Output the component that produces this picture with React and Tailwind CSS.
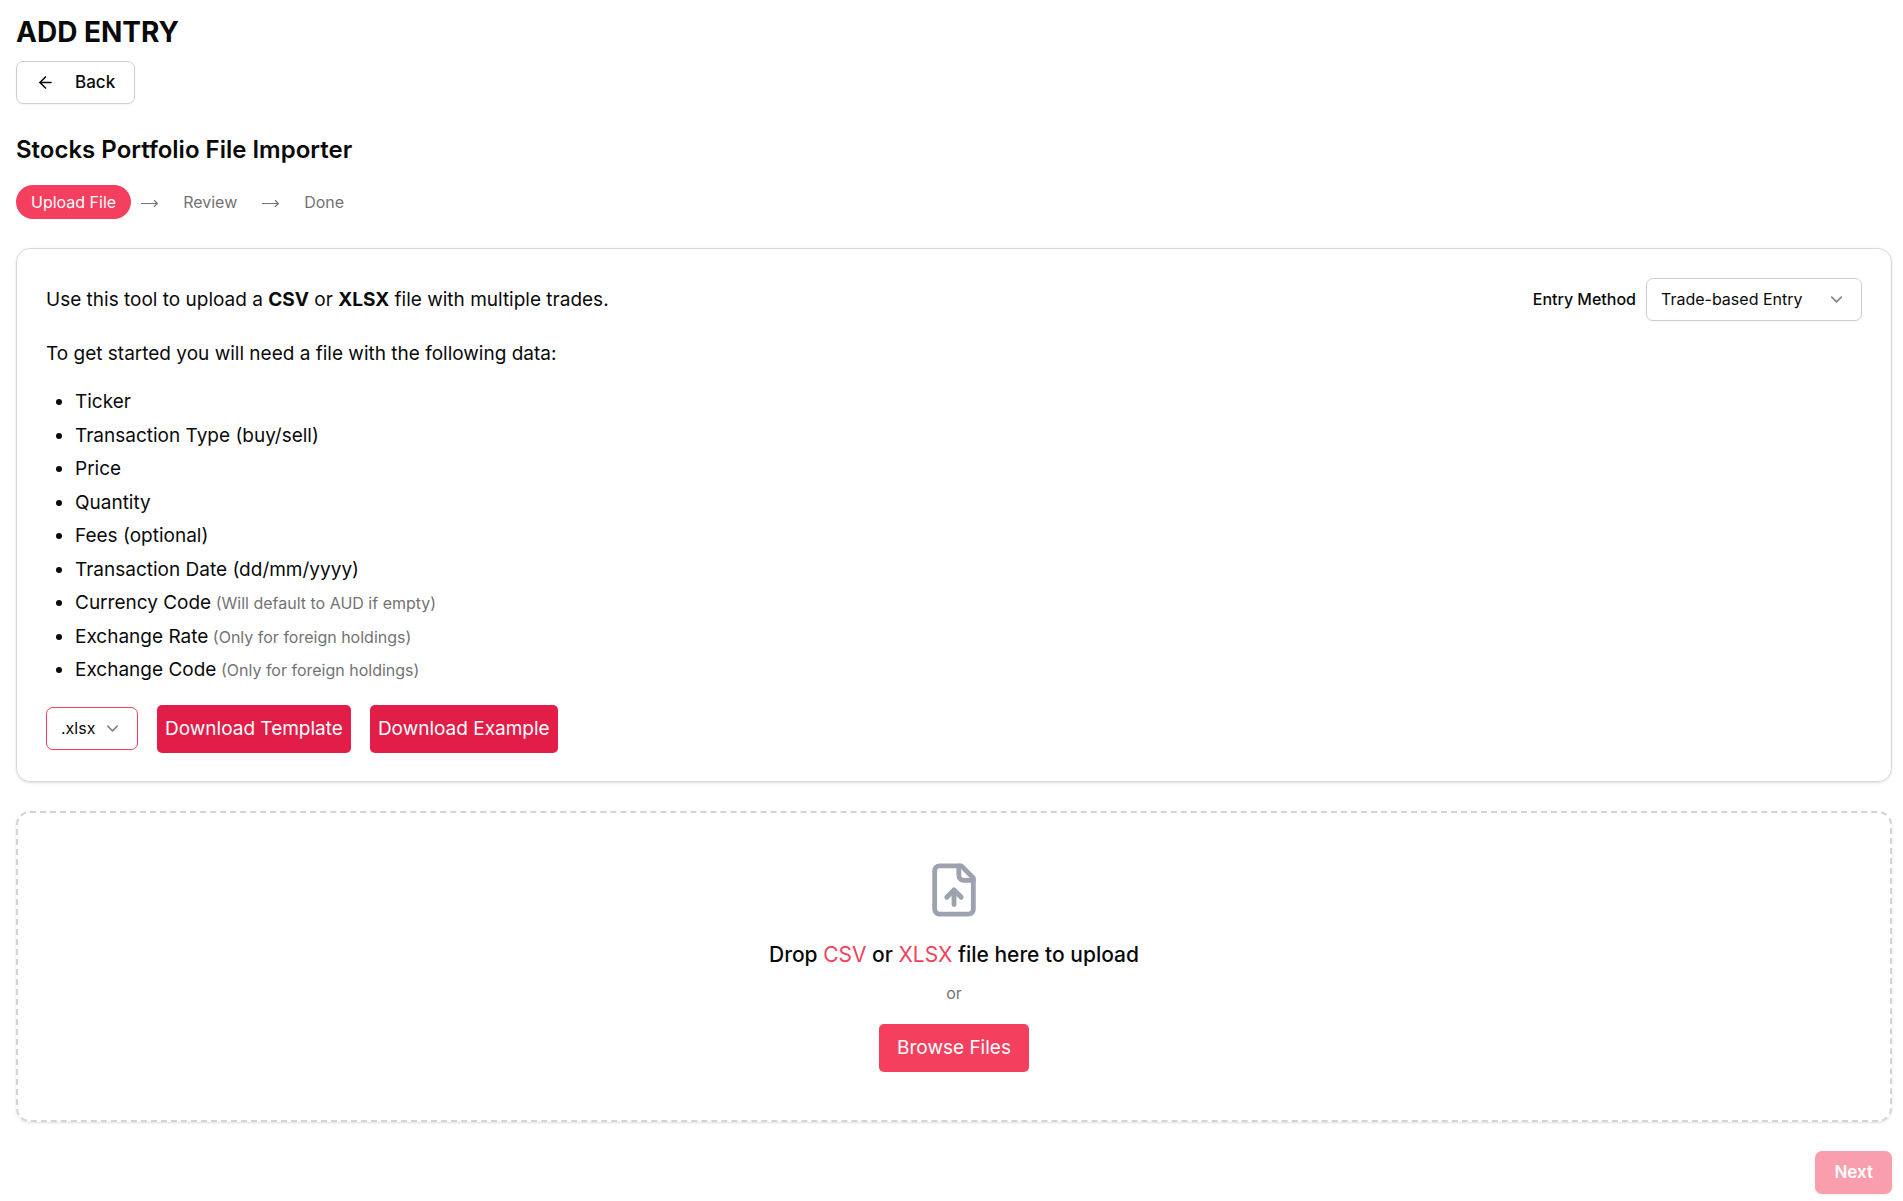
import { ArrowLeft, ChevronDown } from "lucide-react";

const fields = [
  { name: "Ticker" },
  { name: "Transaction Type (buy/sell)" },
  { name: "Price" },
  { name: "Quantity" },
  { name: "Fees (optional)" },
  { name: "Transaction Date (dd/mm/yyyy)" },
  { name: "Currency Code", note: "(Will default to AUD if empty)" },
  { name: "Exchange Rate", note: "(Only for foreign holdings)" },
  { name: "Exchange Code", note: "(Only for foreign holdings)" },
];

function StepArrow() {
  return (
    <svg className="h-[17px] w-[17px]" viewBox="0 0 17 17" fill="none" stroke="currentColor" strokeWidth="1.2" aria-hidden="true">
      <path d="M0 9.5H16.2M13 6.2L16.3 9.5L13 12.8" />
    </svg>
  );
}

function Steps() {
  return (
    <ol className="mt-[18px] flex items-center gap-[10px] text-[16px] leading-6 text-[#737373]">
      <li className="rounded-full bg-[#f43f5e] px-[15px] py-[5px] text-white" aria-current="step">
        Upload File
      </li>
      <li aria-hidden="true"><StepArrow /></li>
      <li className="px-[15px] py-[5px]">Review</li>
      <li aria-hidden="true"><StepArrow /></li>
      <li className="px-[15px] py-[5px]">Done</li>
    </ol>
  );
}

function UploadIcon() {
  return (
    <svg
      className="h-[58px] w-[58px] text-[#9ca3af]"
      viewBox="0 0 24 24"
      fill="none"
      stroke="currentColor"
      strokeWidth="2"
      strokeLinecap="round"
      strokeLinejoin="round"
      aria-hidden="true"
    >
      <path d="M15 2H6a2 2 0 0 0-2 2v16a2 2 0 0 0 2 2h12a2 2 0 0 0 2-2V7Z" />
      <path d="M14 2v4a2 2 0 0 0 2 2h4" />
      <path d="M12 12v6" />
      <path d="m15 15-3-3-3 3" />
    </svg>
  );
}

export default function App() {
  return (
    <main className="bg-white pt-3 pr-[11px] pb-[7px] pl-4 font-['Inter',sans-serif] text-[19px] leading-[29px] text-[#0a0a0a]">
      <h1 className="text-[28px] leading-10 font-bold">ADD ENTRY</h1>
      <button
        type="button"
        className="mt-[9px] flex h-[43px] items-center gap-5 rounded-[7px] border border-[#cfcfcf] px-[19px] text-[17px] font-medium shadow-xs"
      >
        <ArrowLeft className="h-[19px] w-[19px]" />
        Back
      </button>

      <h2 className="mt-[29px] text-2xl leading-[34px] font-semibold">Stocks Portfolio File Importer</h2>
      <Steps />

      <section className="mt-[29px] rounded-[14px] border border-[#d8d8d8] px-[29px] pt-[29px] pb-7 shadow-sm">
        <div className="flex items-center justify-between">
          <p>
            Use this tool to upload a <strong>CSV</strong> or <strong>XLSX</strong> file with multiple trades.
          </p>
          <div className="flex items-center gap-[10px]">
            <label htmlFor="entry-method" className="text-[16px] font-medium">Entry Method</label>
            <div className="relative">
              <select
                id="entry-method"
                className="block h-[43px] w-[216px] appearance-none rounded-[7px] border border-[#cfcfcf] bg-white pr-9 pl-[14px] text-[16px] shadow-xs"
              >
                <option>Trade-based Entry</option>
              </select>
              <ChevronDown className="pointer-events-none absolute top-3 right-4 h-[19px] w-[19px] opacity-50" />
            </div>
          </div>
        </div>
        <p className="mt-[18px]">To get started you will need a file with the following data:</p>
        <ul className="mt-5 flex list-disc flex-col gap-[5px] pl-[29px] leading-normal">
          {fields.map((field) => (
            <li key={field.name}>
              {field.name}
              {field.note && <span className="text-[16px] text-[#737373]"> {field.note}</span>}
            </li>
          ))}
        </ul>
        <div className="mt-5 flex items-center gap-[19px]">
          <div className="relative">
            <select
              aria-label="File format"
              className="block h-[43px] w-[92px] appearance-none rounded-[7px] border border-[#f43f5e] bg-white pl-[14px] text-[16px] shadow-xs"
            >
              <option>.xlsx</option>
            </select>
            <ChevronDown className="pointer-events-none absolute top-3 right-4 h-[19px] w-[19px] opacity-50" />
          </div>
          <button type="button" className="h-12 rounded-[5px] bg-[#e11d48] px-2 text-white">
            Download Template
          </button>
          <button type="button" className="h-12 rounded-[5px] bg-[#e11d48] px-2 text-white">
            Download Example
          </button>
        </div>
      </section>

      <section className="mt-[29px] flex flex-col items-center rounded-[14px] border-2 border-dashed border-[#d1d5db] py-12 shadow-sm">
        <UploadIcon />
        <p className="mt-[19px] text-[21px] leading-[34px] font-medium">
          Drop <span className="font-normal text-[#f43f5e]">CSV</span> or{" "}
          <span className="font-normal text-[#f43f5e]">XLSX</span> file here to upload
        </p>
        <p className="mt-[9px] text-[16px] leading-6 text-[#737373]">or</p>
        <button type="button" className="mt-[19px] h-12 rounded-[5px] bg-[#f43f5e] px-[18px] text-white">
          Browse Files
        </button>
      </section>

      <div className="mt-[29px] flex justify-end">
        <button
          type="button"
          disabled
          className="h-[43px] rounded-[7px] bg-[#f43f5e] px-[19px] text-[17px] font-semibold text-white opacity-50 shadow-sm"
        >
          Next
        </button>
      </div>
    </main>
  );
}
